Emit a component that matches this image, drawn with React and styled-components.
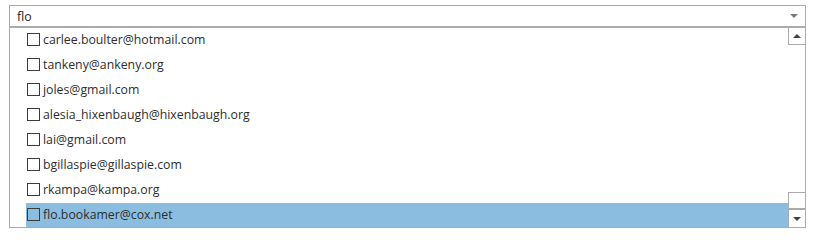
import React from 'react';
import styled, { createGlobalStyle } from 'styled-components';

const GlobalStyle = createGlobalStyle`
  html, body {
    margin: 0;
    padding: 0;
    background: #fff;
  }
  body {
    font-family: "Open Sans", "Noto Sans", sans-serif;
  }
`;

const emails = [
  'carlee.boulter@hotmail.com',
  'tankeny@ankeny.org',
  'joles@gmail.com',
  'alesia_hixenbaugh@hixenbaugh.org',
  'lai@gmail.com',
  'bgillaspie@gillaspie.com',
  'rkampa@kampa.org',
  'flo.bookamer@cox.net',
];

const Combo = styled.div`
  margin: 5px 0 0 9px;
  width: 797px;
`;

const Field = styled.div`
  box-sizing: border-box;
  height: 23px;
  border: 1px solid #ababab;
  border-bottom-width: 2px;
  display: flex;
  align-items: center;
  justify-content: space-between;
  padding: 0 7px 0 7px;
`;

const FieldText = styled.span`
  font-size: 12.3px;
  color: #222;
`;

const Caret = styled.span`
  width: 0;
  height: 0;
  border-left: 4px solid transparent;
  border-right: 4px solid transparent;
  border-top: 4px solid ${p => p.$color || '#7a7a7a'};
  transform: ${p => (p.$up ? 'rotate(180deg)' : 'none')};
`;

const Dropdown = styled.div`
  box-sizing: border-box;
  height: 200px;
  border: 1px solid #ababab;
  border-top: none;
  display: flex;
  overflow: hidden;
`;

const List = styled.ul`
  flex: 1;
  margin: 0;
  padding: 0 0 0 16px;
  list-style: none;
  overflow: hidden;
`;

const Row = styled.li`
  height: 25px;
  display: flex;
  align-items: center;
  padding: 0 0 3px 1px;
  box-sizing: border-box;
  background: ${p => (p.$selected ? '#8bbde1' : 'transparent')};
`;

const Check = styled.span`
  box-sizing: border-box;
  width: 13px;
  height: 13px;
  border: 1px solid #3c3c3c;
  margin-right: 3px;
  flex-shrink: 0;
`;

const Label = styled.span`
  font-size: 12.3px;
  color: #2e2e2e;
  white-space: nowrap;
`;

const ScrollBar = styled.div`
  width: 17px;
  display: flex;
  flex-direction: column;
`;

const ArrowButton = styled.div`
  box-sizing: border-box;
  height: ${p => (p.$up ? '17px' : '18px')};
  border-left: 1px solid #ababab;
  border-bottom: ${p => (p.$up ? '1px solid #ababab' : 'none')};
  border-top: ${p => (p.$up ? 'none' : '1px solid #ababab')};
  display: flex;
  align-items: center;
  justify-content: center;
`;

const Track = styled.div`
  flex: 1;
  display: flex;
  flex-direction: column;
  justify-content: flex-end;
`;

const Thumb = styled.div`
  box-sizing: border-box;
  height: 17px;
  border: 1px solid #ababab;
  border-right: none;
  background: #fff;
`;

export default function App() {
  return (
    <>
      <GlobalStyle />
      <Combo>
        <Field>
          <FieldText>flo</FieldText>
          <Caret />
        </Field>
        <Dropdown>
          <List>
            {emails.map((e, i) => (
              <Row key={e} $selected={i === emails.length - 1}>
                <Check />
                <Label>{e}</Label>
              </Row>
            ))}
          </List>
          <ScrollBar>
            <ArrowButton $up>
              <Caret $up $color="#404040" />
            </ArrowButton>
            <Track>
              <Thumb />
            </Track>
            <ArrowButton>
              <Caret $color="#404040" />
            </ArrowButton>
          </ScrollBar>
        </Dropdown>
      </Combo>
    </>
  );
}
